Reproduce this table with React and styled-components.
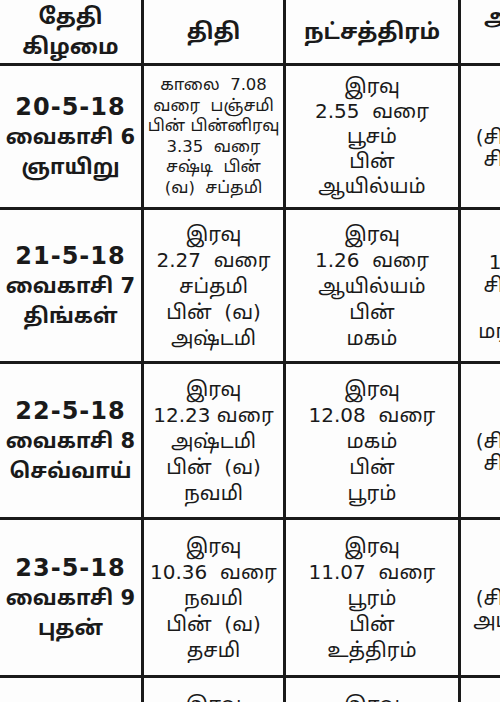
import React from "react";
import styled, { createGlobalStyle } from "styled-components";

const GlobalStyle = createGlobalStyle`
  html, body {
    margin: 0;
    padding: 0;
    background: #fdfdfd;
  }
  body {
    font-family: "DejaVu Sans", "Noto Sans Tamil", "Lohit Tamil", "Noto Sans", sans-serif;
    color: #1a1a1a;
  }
`;

const Page = styled.div`
  width: 500px;
  height: 702px;
  overflow: hidden;
  background: #fdfdfd;
`;

const Grid = styled.div`
  display: grid;
  grid-template-columns: 141px 139px 172px 176px;
  grid-template-rows: 63px 141px 151px 153px 155px 155px;
  gap: 3px;
  background: #1a1a1a;
  width: max-content;
`;

const Cell = styled.div`
  background: #fdfdfd;
  display: flex;
  flex-direction: column;
  align-items: center;
  justify-content: center;
  text-align: center;
  white-space: pre;
  overflow: hidden;
  font-size: ${({ size }) => size || 20}px;
  line-height: ${({ lh }) => lh || 25}px;
  font-weight: ${({ bold }) => (bold ? 700 : 400)};
`;

const HeadCell = styled(Cell)`
  font-size: 22px;
  line-height: 30px;
  font-weight: 700;
`;

const DateLine = styled.span`
  font-size: 24px;
  line-height: 30px;
  letter-spacing: 1px;
`;

const headers = [
  ["தேதி", "கிழமை"],
  ["திதி"],
  ["நட்சத்திரம்"],
  ["அமிர்தாதி", "யோகம்"],
];

const rows = [
  {
    date: ["20-5-18", "வைகாசி 6", "ஞாயிறு"],
    thithi: ["காலை  7.08", "வரை  பஞ்சமி", "பின் பின்னிரவு", "3.35  வரை", "சஷ்டி  பின்", "(வ)  சப்தமி"],
    small: true,
    star: ["இரவு", "2.55  வரை", "பூசம்", "பின்", "ஆயில்யம்"],
    yogam: ["காலை", "(சித்தயோகம்)", "சித்தயோகம்"],
  },
  {
    date: ["21-5-18", "வைகாசி 7", "திங்கள்"],
    thithi: ["இரவு", "2.27  வரை", "சப்தமி", "பின்  (வ)", "அஷ்டமி"],
    star: ["இரவு", "1.26  வரை", "ஆயில்யம்", "பின்", "மகம்"],
    yogam: ["காலை", "11.50 வரை", "சித்தயோகம்", "பின்", "மரணயோகம்"],
    yogamLh: 23,
  },
  {
    date: ["22-5-18", "வைகாசி 8", "செவ்வாய்"],
    thithi: ["இரவு", "12.23 வரை", "அஷ்டமி", "பின்  (வ)", "நவமி"],
    star: ["இரவு", "12.08  வரை", "மகம்", "பின்", "பூரம்"],
    yogam: ["காலை", "(சித்தயோகம்)", "சித்தயோகம்"],
  },
  {
    date: ["23-5-18", "வைகாசி 9", "புதன்"],
    thithi: ["இரவு", "10.36  வரை", "நவமி", "பின்  (வ)", "தசமி"],
    star: ["இரவு", "11.07  வரை", "பூரம்", "பின்", "உத்திரம்"],
    yogam: ["காலை", "(சித்தயோகம்)", "அமிர்தயோகம்"],
  },
  {
    date: ["24-5-18", "வைகாசி 10", "வியாழன்"],
    thithi: ["இரவு", "8.53  வரை", "தசமி", "பின்  (வ)", "ஏகாதசி"],
    star: ["இரவு", "10.12  வரை", "உத்திரம்", "பின்", "அஸ்தம்"],
    yogam: ["காலை", "(சித்தயோகம்)", "அமிர்தயோகம்"],
  },
];

const Lines = ({ items }) => items.map((t, i) => <span key={i}>{t}</span>);

export default function App() {
  return (
    <Page>
      <GlobalStyle />
      <Grid>
        {headers.map((h, i) => (
          <HeadCell key={i}>
            <Lines items={h} />
          </HeadCell>
        ))}
        {rows.map((r) => (
          <React.Fragment key={r.date[0]}>
            <Cell bold lh={30} size={21}>
              <DateLine>{r.date[0]}</DateLine>
              <span>{r.date[1]}</span>
              <span>{r.date[2]}</span>
            </Cell>
            <Cell size={r.small ? 16.5 : 20} lh={r.small ? 20.5 : 26}>
              <Lines items={r.thithi} />
            </Cell>
            <Cell size={20} lh={r.small ? 25 : 26}>
              <Lines items={r.star} />
            </Cell>
            <Cell size={20} lh={r.yogamLh || 22}>
              <Lines items={r.yogam} />
            </Cell>
          </React.Fragment>
        ))}
      </Grid>
    </Page>
  );
}
